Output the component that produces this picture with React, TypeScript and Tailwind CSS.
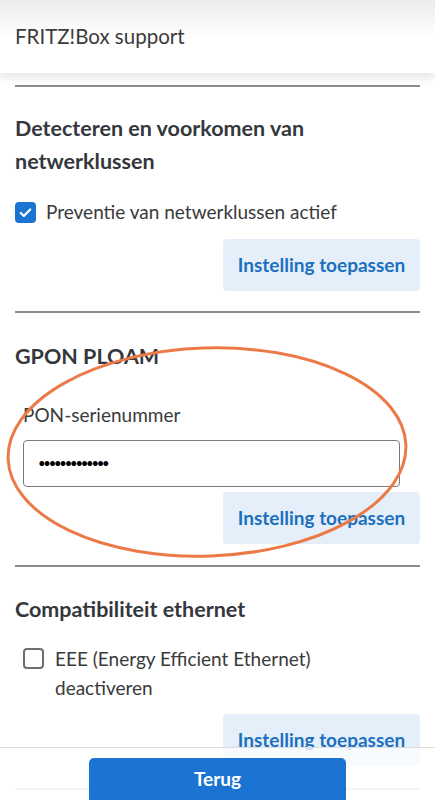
import React from 'react';

const font = { fontFamily: '"Source Sans Pro", Lato, "Noto Sans", sans-serif' };

const ApplyButton = () => (
  <div className="flex justify-end">
    <button className="h-[52px] w-[197px] rounded-[4px] bg-[#e4eff9] text-[19px] font-bold text-[#1d6fbf]">
      Instelling toepassen
    </button>
  </div>
);

const Divider = () => <div className="h-[2px] bg-[#8c8c8c]" />;

export default function App() {
  return (
    <div className="relative min-h-[800px] bg-white text-[#3a3a3a]" style={font}>
      {/* header */}
      <div className="relative z-10 flex h-[73px] items-center bg-gradient-to-b from-[#ececec] via-white to-white px-[15px] shadow-[0_5px_8px_rgba(0,0,0,0.10)]">
        <span className="text-[20.5px] text-[#3b3b3b]">FRITZ!Box support</span>
      </div>

      <div className="px-[15px] pb-[120px] pt-[12px]">
        <Divider />

        {/* loop detection */}
        <section className="pb-[20px] pt-[25px]">
          <h2 className="text-[21.5px] font-bold leading-[33px] text-[#34373b]">
            Detecteren en voorkomen van
            <br />
            netwerklussen
          </h2>
          <label className="mt-[20px] flex h-[28px] items-center gap-[10px]">
            <span className="flex h-[21px] w-[21px] items-center justify-center rounded-[4px] bg-[#1c74d2]">
              <svg viewBox="0 0 16 16" className="h-[15px] w-[15px]" fill="none" stroke="white" strokeWidth="2.4" strokeLinecap="round" strokeLinejoin="round">
                <path d="M3 8.5l3.2 3.2L13 4.8" />
              </svg>
            </span>
            <span className="text-[19px]">Preventie van netwerklussen actief</span>
          </label>
          <div className="mt-[13px]">
            <ApplyButton />
          </div>
        </section>

        <Divider />

        {/* GPON */}
        <section className="pb-[21px] pt-[27px]">
          <h2 className="text-[21.5px] font-bold leading-[33px] text-[#34373b]">GPON PLOAM</h2>
          <div className="mt-[28px] pl-[8px]">
            <div className="text-[19px] leading-[28px]">PON-serienummer</div>
            <div className="mr-[20px] mt-[11px] flex h-[47px] items-center rounded-[4px] border border-[#7a7a7a] px-[14px]">
              <span className="text-[13px] tracking-[-2.2px] text-black">•••••••••••••</span>
            </div>
          </div>
          <div className="mt-[5px]">
            <ApplyButton />
          </div>
        </section>

        <Divider />

        {/* ethernet */}
        <section className="pb-[22px] pt-[26px]">
          <h2 className="text-[21.5px] font-bold leading-[33px] text-[#34373b]">Compatibiliteit ethernet</h2>
          <label className="mt-[18px] flex items-start gap-[11px] pl-[8px]">
            <span className="mt-[4px] h-[21px] w-[21px] shrink-0 rounded-[4px] border-2 border-[#6e6e6e]" />
            <span className="text-[19px] leading-[29px]">
              EEE (Energy Efficient Ethernet)
              <br />
              deactiveren
            </span>
          </label>
          <div className="mt-[12px]">
            <ApplyButton />
          </div>
        </section>

        <div className="h-[2px] bg-[#d8d8d8]" />
        <div className="h-[200px]" />
      </div>

      {/* annotation ellipse */}
      <svg className="pointer-events-none absolute left-0 top-0 z-20" width="435" height="800">
        <ellipse cx="207" cy="452" rx="199" ry="104" transform="rotate(-2 207 452)" fill="none" stroke="#ec7a48" strokeWidth="3" />
      </svg>

      {/* bottom bar */}
      <div className="fixed bottom-0 left-0 right-0 z-30 flex h-[53px] justify-center border-t border-[#dcdcdc] bg-white/75">
        <button className="mt-[10px] h-[52px] w-[257px] rounded-[5px] bg-[#1b74d2] pb-[10px] text-[19px] font-bold text-white">
          Terug
        </button>
      </div>
    </div>
  );
}
